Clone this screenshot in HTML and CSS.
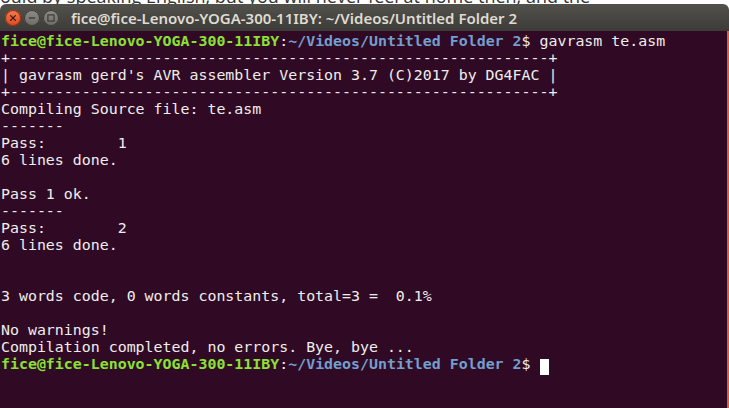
FILE: index.html
```html
<!DOCTYPE html>
<html lang="en">
<head>
<meta charset="utf-8">
<title>Terminal</title>
<link rel="stylesheet" href="styles.css">
</head>
<body>
<div class="page">
  <div class="behind"><span class="behind-text">ould by speaking English, but you will never feel at home then, and the</span></div>
  <div class="window">
    <div class="titlebar">
      <div class="controls">
        <span class="btn close"><svg viewBox="0 0 16 16" width="16" height="16"><path d="M5.6 5.6 L10.4 10.4 M10.4 5.6 L5.6 10.4" stroke="#3a1a10" stroke-width="1.3" stroke-linecap="round"/></svg></span>
        <span class="btn"><svg viewBox="0 0 16 16" width="16" height="16"><path d="M4.8 8 H11.2" stroke="#3c3b37" stroke-width="1.4"/></svg></span>
        <span class="btn"><svg viewBox="0 0 16 16" width="16" height="16"><rect x="4.9" y="4.9" width="6.2" height="6.2" fill="none" stroke="#3c3b37" stroke-width="1.2"/></svg></span>
      </div>
      <div class="title">fice@fice-Lenovo-YOGA-300-11IBY: ~/Videos/Untitled Folder 2</div>
    </div>
    <div class="body">
      <pre class="term"><span class="u">fice@fice-Lenovo-YOGA-300-11IBY</span>:<span class="p">~/Videos/Untitled Folder 2</span>$ gavrasm te.asm
+------------------------------------------------------------+
| gavrasm gerd's AVR assembler Version 3.7 (C)2017 by DG4FAC |
+------------------------------------------------------------+
Compiling Source file: te.asm
-------
Pass:        1
6 lines done.

Pass 1 ok.
-------
Pass:        2
6 lines done.


3 words code, 0 words constants, total=3 =  0.1%

No warnings!
Compilation completed, no errors. Bye, bye ...
<span class="u">fice@fice-Lenovo-YOGA-300-11IBY</span>:<span class="p">~/Videos/Untitled Folder 2</span>$ <span class="cursor"> </span></pre>
      <div class="edge"></div>
    </div>
  </div>
</div>
</body>
</html>
```
FILE: styles.css
```css
html, body {
  margin: 0;
  padding: 0;
}
body {
  width: 729px;
  height: 408px;
  overflow: hidden;
  background: #ffffff;
}
.page {
  display: flex;
  flex-direction: column;
  height: 408px;
}
.behind {
  height: 4px;
  overflow: hidden;
  background: #ffffff;
}
.behind-text {
  display: block;
  font-family: "Open Sans", sans-serif;
  font-size: 18px;
  line-height: 18px;
  color: #333;
  margin-top: -13px;
  white-space: nowrap;
}
.window {
  flex: 1;
  display: flex;
  flex-direction: column;
  min-height: 0;
}
.titlebar {
  height: 27px;
  flex: none;
  display: flex;
  align-items: center;
  background: linear-gradient(#52514c, #3c3b37);
  border-radius: 6px 6px 0 0;
}
.controls {
  display: flex;
  gap: 3px;
  padding-left: 5px;
  width: 66px;
  flex: none;
}
.btn {
  width: 16px;
  height: 16px;
  border-radius: 50%;
  background: linear-gradient(#8e8c86, #6e6c67);
  box-shadow: inset 0 0 0 1px #3a3935;
  display: flex;
}
.btn.close {
  background: linear-gradient(#f37a52, #df4a1c);
  box-shadow: inset 0 0 0 1px #8e2d10;
}
.title {
  font-family: "Noto Sans", sans-serif;
  font-weight: 600;
  font-size: 15px;
  color: #dfdbd2;
  white-space: nowrap;
  padding-top: 1px;
}
.body {
  flex: 1;
  display: flex;
  min-height: 0;
}
.term {
  flex: 1;
  margin: 0;
  background: #300a24;
  color: #eeeeec;
  font-family: "DejaVu Sans Mono", monospace;
  font-size: 14.92px;
  line-height: 17px;
  padding: 2px 0 0 1px;
  overflow: hidden;
}
.u {
  color: #8ae234;
  font-weight: 700;
}
.p {
  color: #729fcf;
  font-weight: 700;
}
.cursor {
  display: inline-block;
  width: 9px;
  height: 16px;
  background: #ffffff;
  vertical-align: -3px;
}
.edge {
  width: 2px;
  flex: none;
  background: #d9613a;
}
```
